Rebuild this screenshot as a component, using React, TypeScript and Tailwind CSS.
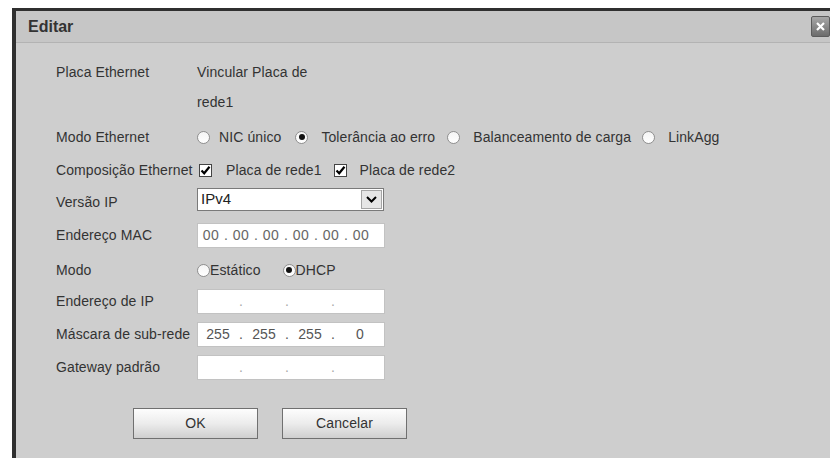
import type { ReactNode } from 'react'

const FONT = 'font-["Liberation_Sans",Arial,sans-serif]'

function Radio({ checked = false }: { checked?: boolean }) {
  return (
    <span className="flex h-[13px] w-[13px] shrink-0 items-center justify-center rounded-full border border-[#8f8f8f] bg-gradient-to-b from-[#f4f4f4] to-white">
      {checked && <span className="h-[6px] w-[6px] rounded-full bg-[#111]" />}
    </span>
  )
}

function Checkbox() {
  return (
    <span className="flex h-[13px] w-[13px] shrink-0 items-center justify-center border border-[#444] bg-white">
      <svg width="11" height="11" viewBox="0 0 11 11">
        <path d="M1.5 5.5 L4.2 8.3 L9.5 1.8" fill="none" stroke="#000" strokeWidth="2.2" />
      </svg>
    </span>
  )
}

function Row({ label, className, children }: { label?: string; className: string; children?: ReactNode }) {
  return (
    <div className={`flex h-[26px] items-center ${className}`}>
      <div className="w-[141px] shrink-0 whitespace-nowrap">{label}</div>
      {children}
    </div>
  )
}

// four-octet address box, empty octets still show their separators
function IpField({ octets }: { octets?: string[] }) {
  const dot = octets ? 'text-[#555]' : 'text-[#aaa]'
  const v = octets ?? ['', '', '', '']
  return (
    <div className="flex h-[25px] w-[188px] items-center border border-[#c2c2c2] bg-white text-[#555]">
      <span className="w-[40px] text-center">{v[0]}</span>
      <span className={`w-[6px] text-center ${dot}`}>.</span>
      <span className="w-[40px] text-center">{v[1]}</span>
      <span className={`w-[6px] text-center ${dot}`}>.</span>
      <span className="w-[40px] text-center">{v[2]}</span>
      <span className={`w-[6px] text-center ${dot}`}>.</span>
      <span className="flex-1 text-center">{v[3]}</span>
    </div>
  )
}

function MacField() {
  const parts = ['00', '00', '00', '00', '00', '00']
  return (
    <div className="flex h-[25px] w-[188px] items-center border border-[#c2c2c2] bg-white pl-[1px] text-[#666]">
      {parts.map((p, i) => (
        <span key={i} className="flex">
          <span className="w-[24px] text-center tracking-[0.5px]">{p}</span>
          {i < parts.length - 1 && <span className="w-[6px] text-center">.</span>}
        </span>
      ))}
    </div>
  )
}

function Button({ children }: { children: ReactNode }) {
  return (
    <button className="h-[31px] w-[125px] border border-[#707070] bg-gradient-to-b from-[#fdfdfd] via-[#ececec] to-[#cfcfcf] text-[14px] text-[#333]">
      {children}
    </button>
  )
}

export default function App() {
  return (
    <div className={`h-[458px] w-[830px] overflow-hidden bg-white pl-[12px] pt-[8px] text-[14px] tracking-[0.1px] text-[#333] ${FONT}`}>
      <div className="h-full border-l-4 border-t-[3px] border-[#2f2f2f] bg-[#cecece]">
        <div className="flex h-[32px] items-center justify-between border-b border-[#b3b3b3] bg-[#c6c6c6] pl-[12px]">
          <span className="text-[16px] font-bold tracking-normal text-[#333]">Editar</span>
          <span className="flex h-[21px] w-[19px] items-center justify-center rounded-[2px] border border-[#5c5c5c] bg-gradient-to-b from-[#a8a8a8] to-[#6c6c6c]">
            <svg width="9" height="9" viewBox="0 0 9 9">
              <path d="M1 1 L8 8 M8 1 L1 8" stroke="#fff" strokeWidth="2.2" />
            </svg>
          </span>
        </div>

        <div className="pl-[40px] pt-[16px]">
          <Row label="Placa Ethernet" className="">
            <span>Vincular Placa de</span>
          </Row>
          <Row className="mt-[4px]">
            <span>rede1</span>
          </Row>
          <Row label="Modo Ethernet" className="mt-[9px]">
            <Radio />
            <span className="ml-[9px]">NIC único</span>
            <span className="ml-[14px]"><Radio checked /></span>
            <span className="ml-[13px]">Tolerância ao erro</span>
            <span className="ml-[12px]"><Radio /></span>
            <span className="ml-[13px]">Balanceamento de carga</span>
            <span className="ml-[11px]"><Radio /></span>
            <span className="ml-[13px]">LinkAgg</span>
          </Row>
          <Row label="Composição Ethernet" className="mt-[7px]">
            <span className="ml-[2px]"><Checkbox /></span>
            <span className="ml-[14px]">Placa de rede1</span>
            <span className="ml-[12px]"><Checkbox /></span>
            <span className="ml-[13px]">Placa de rede2</span>
          </Row>
          <Row label="Versão IP" className="mt-[6px]">
            <div className="-mt-[5px] flex h-[23px] w-[187px] items-center border border-[#7a7a7a] bg-white pl-[3px] pr-[1px]">
              <span className="flex-1 text-[15px] tracking-normal text-[#222]">IPv4</span>
              <span className="flex h-[19px] w-[21px] items-center justify-center border border-[#a5a5a5] bg-[#e6e6e6]">
                <svg width="11" height="7" viewBox="0 0 11 7">
                  <path d="M1 1 L5.5 5.5 L10 1" fill="none" stroke="#000" strokeWidth="2" />
                </svg>
              </span>
            </div>
          </Row>
          <Row label="Endereço MAC" className="mt-[7px]">
            <MacField />
          </Row>
          <Row label="Modo" className="mt-[9px]">
            <Radio />
            <span>Estático</span>
            <span className="ml-[22px]"><Radio checked /></span>
            <span>DHCP</span>
          </Row>
          <Row label="Endereço de IP" className="mt-[5px]">
            <IpField />
          </Row>
          <Row label="Máscara de sub-rede" className="mt-[7px]">
            <IpField octets={['255', '255', '255', '0']} />
          </Row>
          <Row label="Gateway padrão" className="mt-[7px]">
            <IpField />
          </Row>

          <div className="mt-[28px] flex gap-[24px] pl-[77px]">
            <Button>OK</Button>
            <Button>Cancelar</Button>
          </div>
        </div>
      </div>
    </div>
  )
}
